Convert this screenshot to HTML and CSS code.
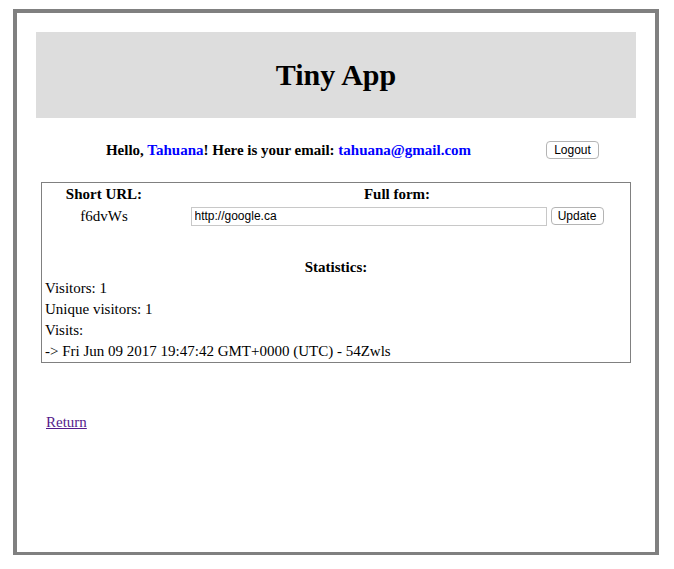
FILE: index.html
```html
<!DOCTYPE html>
<html>
<head>
<meta charset="utf-8">
<link rel="stylesheet" href="styles.css">
</head>
<body>
<div class="page">
  <header class="banner"><h1 class="title">Tiny App</h1></header>
  <div class="greeting">
    <div class="greeting-text">Hello, <span class="hl">Tahuana</span>! Here is your email: <span class="hl">tahuana@gmail.com</span></div>
    <button class="btn btn-logout">Logout</button>
  </div>
  <div class="card">
    <div class="row row-head">
      <div class="col-short th">Short URL:</div>
      <div class="col-full th">Full form:</div>
    </div>
    <div class="row row-form">
      <div class="col-short">f6dvWs</div>
      <div class="col-full form">
        <input class="url-input" type="text" value="http://google.ca">
        <button class="btn btn-update">Update</button>
      </div>
    </div>
    <div class="spacer"></div>
    <div class="stats-title">Statistics:</div>
    <div class="line">Visitors: 1</div>
    <div class="line">Unique visitors: 1</div>
    <div class="line">Visits:</div>
    <div class="line">-&gt; Fri Jun 09 2017 19:47:42 GMT+0000 (UTC) - 54Zwls</div>
  </div>
  <a class="return" href="#">Return</a>
</div>
</body>
</html>
```
FILE: styles.css
```css
html, body {
  margin: 0;
  padding: 0;
  background: #ffffff;
}
body {
  font-family: "Liberation Serif", "Times New Roman", serif;
  font-size: 15px;
  color: #000;
}
.page {
  box-sizing: border-box;
  margin: 9px 0 0 13px;
  width: 646px;
  height: 546px;
  border: 4px solid #808080;
  border-bottom-width: 3px;
  padding: 19px 0 0 19px;
}
.banner {
  width: 600px;
  height: 86px;
  background: #dddddd;
  display: flex;
  align-items: center;
  justify-content: center;
}
.title {
  margin: 0;
  font-size: 30px;
  font-weight: bold;
  line-height: 1;
  padding-top: 0;
}
.greeting {
  display: flex;
  align-items: center;
  margin-top: 23px;
  height: 18px;
}
.greeting-text {
  width: 505px;
  text-align: center;
  font-weight: bold;
  font-size: 15px;
  white-space: nowrap;
}
.hl {
  color: #0000ff;
}
.btn {
  box-sizing: border-box;
  font-family: "Liberation Sans", Arial, sans-serif;
  font-size: 12px;
  height: 18px;
  padding: 0 6px;
  background: #ffffff;
  border: 1px solid #b4b4b4;
  border-radius: 4px;
  color: #000;
  line-height: 16px;
}
.btn-logout {
  margin-left: 5px;
  width: 53px;
}
.card {
  box-sizing: border-box;
  margin: 23px 0 0 5px;
  width: 590px;
  height: 181px;
  border: 1px solid #808080;
  padding-top: 1px;
}
.row {
  display: flex;
  align-items: center;
}
.row-head {
  height: 21px;
}
.row-form {
  height: 22px;
}
.col-short {
  width: 124px;
  text-align: center;
}
.col-full {
  width: 462px;
  text-align: center;
}
.th {
  font-weight: bold;
}
.form {
  display: flex;
  justify-content: center;
  align-items: center;
  gap: 4px;
}
.url-input {
  box-sizing: border-box;
  width: 356px;
  height: 19px;
  margin: 0;
  padding: 0 3px;
  border: 1px solid #c8c8c8;
  font-family: "Liberation Sans", Arial, sans-serif;
  font-size: 12px;
  color: #000;
}
.btn-update {
  width: 53px;
}
.spacer {
  height: 30px;
}
.stats-title {
  height: 21px;
  line-height: 21px;
  text-align: center;
  font-weight: bold;
}
.line {
  height: 21px;
  line-height: 21px;
  padding-left: 3px;
}
.return {
  display: inline-block;
  margin: 51px 0 0 10px;
  color: #551a8b;
}
```
